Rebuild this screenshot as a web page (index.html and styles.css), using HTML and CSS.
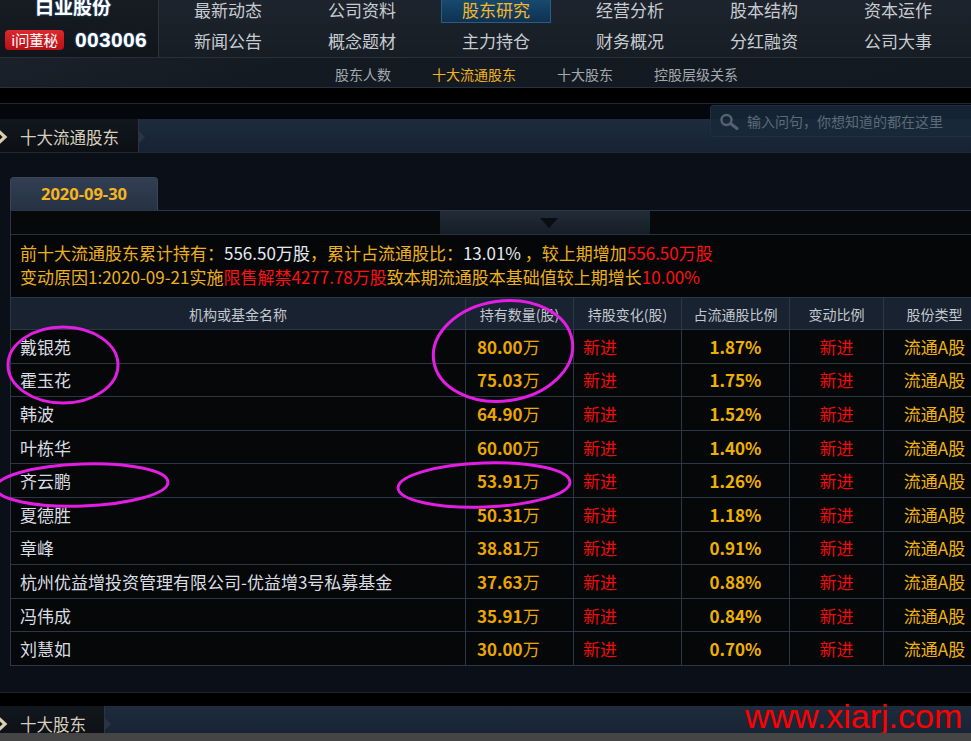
FILE: index.html
```html
<!DOCTYPE html>
<html lang="zh-CN">
<head>
<meta charset="utf-8">
<title>十大流通股东</title>
<link rel="stylesheet" href="styles.css">
</head>
<body>
<div class="page">
  <header class="top">
    <div class="top-main">
      <div class="logo">
        <div class="stock-name">白业股份</div>
        <div class="stock-row"><span class="badge">i问董秘</span><span class="code">003006</span></div>
      </div>
      <nav class="nav">
        <a>最新动态</a><a>公司资料</a><a class="active">股东研究</a><a>经营分析</a><a>股本结构</a><a>资本运作</a>
        <a>新闻公告</a><a>概念题材</a><a>主力持仓</a><a>财务概况</a><a>分红融资</a><a>公司大事</a>
      </nav>
    </div>
    <div class="subnav">
      <a>股东人数</a><a class="active">十大流通股东</a><a>十大股东</a><a>控股层级关系</a>
    </div>
  </header>
  <div class="gap"></div>

  <section class="section">
    <div class="section-bar">
      <div class="section-label">
        <svg class="chev" width="9" height="14" viewBox="0 0 9 14"><polyline points="-1,1.5 5,7 -1,12.5" fill="none" stroke="#ddcfae" stroke-width="3.2"/></svg>
        十大流通股东
      </div>
    </div>
    <div class="section-body">
      <div class="tabs"><span class="tab">2020-09-30</span></div>
      <div class="panel">
        <div class="panel-top">
          <div class="toggle"><svg width="18" height="10" viewBox="0 0 18 10"><polygon points="0,0 18,0 9,10" fill="#0a0d12"/></svg></div>
        </div>
        <div class="summary">
          <p><span class="o">前十大流通股东累计持有：</span><span class="w">556.50万股</span><span class="o">，累计占流通股比：</span><span class="w">13.01% </span><span class="o">，较上期增加</span><span class="r">556.50万股</span></p>
          <p><span class="o">变动原因1:2020-09-21实施</span><span class="r">限售解禁4277.78万股</span><span class="o">致本期流通股本基础值较上期增长</span><span class="r">10.00%</span></p>
        </div>
        <table class="holders">
          <colgroup><col class="c1"><col class="c2"><col class="c3"><col class="c4"><col class="c5"><col class="c6"></colgroup>
          <thead>
            <tr><th>机构或基金名称</th><th>持有数量(股)</th><th>持股变化(股)</th><th>占流通股比例</th><th>变动比例</th><th>股份类型</th></tr>
          </thead>
          <tbody>
            <tr><td class="name">戴银苑</td><td class="num"><b>80.00</b>万</td><td class="chg">新进</td><td class="pct">1.87%</td><td class="chg2">新进</td><td class="type">流通A股</td></tr>
            <tr><td class="name">霍玉花</td><td class="num"><b>75.03</b>万</td><td class="chg">新进</td><td class="pct">1.75%</td><td class="chg2">新进</td><td class="type">流通A股</td></tr>
            <tr><td class="name">韩波</td><td class="num"><b>64.90</b>万</td><td class="chg">新进</td><td class="pct">1.52%</td><td class="chg2">新进</td><td class="type">流通A股</td></tr>
            <tr><td class="name">叶栋华</td><td class="num"><b>60.00</b>万</td><td class="chg">新进</td><td class="pct">1.40%</td><td class="chg2">新进</td><td class="type">流通A股</td></tr>
            <tr><td class="name">齐云鹏</td><td class="num"><b>53.91</b>万</td><td class="chg">新进</td><td class="pct">1.26%</td><td class="chg2">新进</td><td class="type">流通A股</td></tr>
            <tr><td class="name">夏德胜</td><td class="num"><b>50.31</b>万</td><td class="chg">新进</td><td class="pct">1.18%</td><td class="chg2">新进</td><td class="type">流通A股</td></tr>
            <tr><td class="name">章峰</td><td class="num"><b>38.81</b>万</td><td class="chg">新进</td><td class="pct">0.91%</td><td class="chg2">新进</td><td class="type">流通A股</td></tr>
            <tr><td class="name">杭州优益增投资管理有限公司-优益增3号私募基金</td><td class="num"><b>37.63</b>万</td><td class="chg">新进</td><td class="pct">0.88%</td><td class="chg2">新进</td><td class="type">流通A股</td></tr>
            <tr><td class="name">冯伟成</td><td class="num"><b>35.91</b>万</td><td class="chg">新进</td><td class="pct">0.84%</td><td class="chg2">新进</td><td class="type">流通A股</td></tr>
            <tr><td class="name">刘慧如</td><td class="num"><b>30.00</b>万</td><td class="chg">新进</td><td class="pct">0.70%</td><td class="chg2">新进</td><td class="type">流通A股</td></tr>
          </tbody>
        </table>
      </div>
    </div>
  </section>
  <div class="gap2"></div>

  <section class="section">
    <div class="section-bar">
      <div class="section-label short">
        <svg class="chev" width="9" height="14" viewBox="0 0 9 14"><polyline points="-1,1.5 5,7 -1,12.5" fill="none" stroke="#ddcfae" stroke-width="3.2"/></svg>
        十大股东
      </div>
    </div>
  </section>

  <div class="search">
    <svg class="mag" width="20" height="17" viewBox="0 0 20 17"><circle cx="7.5" cy="7" r="5" fill="none" stroke="#56616e" stroke-width="2.4"/><line x1="11.5" y1="10.5" x2="18" y2="15.5" stroke="#56616e" stroke-width="3" stroke-linecap="round"/></svg>
    <span>输入问句，你想知道的都在这里</span>
  </div>

  <svg class="marks" width="971" height="741" viewBox="0 0 971 741">
    <ellipse cx="63" cy="365" rx="55" ry="38" fill="none" stroke="#e21ee2" stroke-width="3"/>
    <ellipse cx="503" cy="351" rx="70" ry="50" transform="rotate(-8 503 351)" fill="none" stroke="#e21ee2" stroke-width="3"/>
    <ellipse cx="82" cy="485" rx="86" ry="21" transform="rotate(-2 82 485)" fill="none" stroke="#e21ee2" stroke-width="3"/>
    <ellipse cx="484" cy="485" rx="86" ry="22" transform="rotate(-2 484 485)" fill="none" stroke="#e21ee2" stroke-width="3"/>
  </svg>

  <div class="watermark">www.xiarj.com</div>
  <div class="hscroll"></div>
</div>
</body>
</html>
```

FILE: styles.css
```css
html, body {
  margin: 0;
  padding: 0;
  background: #000;
  overflow: hidden;
}
body {
  font-family: "Noto Sans CJK SC", "Noto Sans", sans-serif;
}
.page {
  position: relative;
  width: 971px;
  height: 741px;
  overflow: hidden;
  background: #000;
}
a { cursor: pointer; }

/* ---------- header ---------- */
.top-main {
  display: flex;
  height: 57px;
  border-bottom: 1px solid #27303a;
  background: linear-gradient(180deg, #1d242d 0%, #171d25 100%);
}
.logo {
  width: 158px;
  flex: none;
  border-right: 1px solid #2b333d;
  background: linear-gradient(180deg, #171c23 0%, #11151b 100%);
  overflow: hidden;
}
.stock-name {
  margin-top: -4px;
  padding-left: 35px;
  font-size: 19px;
  line-height: 19px;
  font-weight: 700;
  color: #ffffff;
  text-shadow: 0 0 2px #4a7ab8;
}
.stock-row {
  display: flex;
  align-items: center;
  margin-top: 15px;
  height: 20px;
}
.badge {
  margin-left: 5px;
  width: 59px;
  height: 20px;
  box-sizing: border-box;
  border-radius: 4px;
  background: linear-gradient(180deg, #dc2a2e 0%, #b80f16 100%);
  color: #fff;
  font-size: 14.5px;
  line-height: 20px;
  text-align: center;
  letter-spacing: -0.3px;
}
.code {
  margin-left: 11px;
  font-family: "Liberation Sans", Arial, sans-serif;
  font-weight: 700;
  font-size: 21px;
  color: #ffffff;
  letter-spacing: 0.3px;
  text-shadow: 0 0 2px #4a7ab8;
}
.nav {
  display: grid;
  grid-template-columns: repeat(6, 134px);
  grid-template-rows: 24px 33px;
  padding-left: 2px;
}
.nav a {
  display: block;
  justify-self: center;
  font-size: 17px;
  line-height: 19px;
  color: #c8ccd1;
  text-align: center;
  white-space: nowrap;
}
.nav a:nth-child(n+7) {
  line-height: 33px;
}
.nav a.active {
  width: 108px;
  height: 22px;
  line-height: 20px;
  background: linear-gradient(180deg, #17496f 0%, #0e3252 100%);
  border: 1px solid #2d5c83;
  border-top: none;
  color: #f4b62a;
}
.subnav {
  display: flex;
  gap: 41px;
  height: 30px;
  box-sizing: border-box;
  padding: 3px 0 0 335px;
  border-bottom: 1px solid #28313c;
  background: linear-gradient(160deg, #1a212a 0%, #141a22 30%, #131920 100%);
}
.subnav a {
  font-size: 14px;
  line-height: 26px;
  color: #a4a9af;
}
.subnav a.active { color: #f2b320; }

.gap {
  height: 31px;
  background: linear-gradient(180deg, #000 0, #000 15px, #1f2731 15px, #1f2731 16px, #04070b 16px);
}

/* ---------- section ---------- */
.section-bar {
  display: flex;
  height: 33px;
  border-bottom: 1px solid #202933;
  background: linear-gradient(180deg, #1e2b3d 0%, #172334 100%);
}
.section-label {
  position: relative;
  width: 139px;
  flex: none;
  box-sizing: border-box;
  border-right: 1px solid #2b3541;
  background: linear-gradient(180deg, #12171e 0%, #0c1015 100%);
  display: flex;
  align-items: center;
  gap: 11px;
  padding-top: 2px;
  font-size: 16.5px;
  color: #d7cfbc;
}
.section-label.short { width: 105px; }
.section-label::after {
  content: "";
  position: absolute;
  right: -7px;
  top: 12px;
  border-left: 6px solid #2b3541;
  border-top: 6px solid transparent;
  border-bottom: 6px solid transparent;
}
.chev { flex: none; }

.section-body {
  height: 540px;
  box-sizing: border-box;
  padding-top: 24px;
  border-bottom: 1px solid #1c242e;
  background: #0b0f17;
  overflow: hidden;
}
.tabs { padding-left: 10px; height: 33px; }
.tab {
  display: block;
  width: 148px;
  height: 33px;
  box-sizing: border-box;
  border: 1px solid #3a4658;
  border-bottom: none;
  border-radius: 4px 4px 0 0;
  background: linear-gradient(180deg, #323f53 0%, #263243 100%);
  text-align: center;
  font-family: "Noto Sans", sans-serif;
  font-weight: 700;
  font-size: 16.5px;
  line-height: 32px;
  color: #f6b51e;
}
.panel {
  margin-left: 10px;
  width: 975px;
  border-left: 1px solid #2b3646;
  border-top: 1px solid #2b3646;
}
.panel-top {
  height: 23px;
  border-bottom: 1px solid #27323f;
  background: #070809;
}
.toggle {
  margin-left: 429px;
  width: 210px;
  height: 23px;
  background: linear-gradient(180deg, #222c38 0%, #161d26 100%);
  display: flex;
  justify-content: center;
  align-items: center;
}
.toggle svg { margin-left: 8px; margin-top: 1px; }
.summary {
  background: #050608;
  padding: 6px 0 8px 9px;
  font-size: 17px;
  line-height: 24px;
  white-space: nowrap;
}
.summary p { margin: 0; }
.o { color: #ecb01e; }
.w { color: #e4eaf0; }
.r { color: #ff1010; }

/* ---------- table ---------- */
.holders {
  width: 975px;
  table-layout: fixed;
  border-collapse: collapse;
  margin-left: -1px;
}
.c1 { width: 455px; }
.c2 { width: 108px; }
.c3 { width: 108px; }
.c4 { width: 108px; }
.c5 { width: 94px; }
.c6 { width: 102px; }
.holders th, .holders td {
  border: 1px solid #2b3646;
  padding: 0;
  white-space: nowrap;
  overflow: hidden;
}
.holders th {
  height: 31px;
  background: #182231;
  font-weight: 400;
  font-size: 14px;
  color: #c3c8ce;
  text-align: center;
}
.holders td {
  height: 32.6px;
  background: #060708;
  font-size: 17px;
}
.name { padding-left: 9px !important; color: #d9dde2; }
.num { padding-left: 11px !important; color: #eba600; }
.num b { font-weight: 700; }
.chg { padding-left: 9px !important; color: #f00c0c; }
.pct { text-align: center; font-weight: 700; color: #efb100; }
.chg2 { text-align: center; color: #f00c0c; }
.type { text-align: center; color: #efb312; }

.gap2 { height: 13px; background: #000; }

/* ---------- overlays ---------- */
.search {
  position: absolute;
  left: 710px;
  top: 105px;
  width: 268px;
  height: 32px;
  box-sizing: border-box;
  border: 1px solid #1f2e40;
  border-radius: 3px;
  background: rgba(24, 40, 58, 0.85);
  display: flex;
  align-items: center;
  padding-left: 8px;
  gap: 8px;
  font-size: 14px;
  color: #5e6a77;
}
.marks {
  position: absolute;
  left: 0;
  top: 0;
  pointer-events: none;
}
.watermark {
  position: absolute;
  left: 745px;
  top: 699px;
  font-family: "Liberation Sans", Arial, sans-serif;
  font-size: 34px;
  line-height: 34px;
  color: #ff0000;
}
.hscroll {
  position: absolute;
  left: 0;
  bottom: 0;
  width: 971px;
  height: 8px;
  background: #454545;
}
```
